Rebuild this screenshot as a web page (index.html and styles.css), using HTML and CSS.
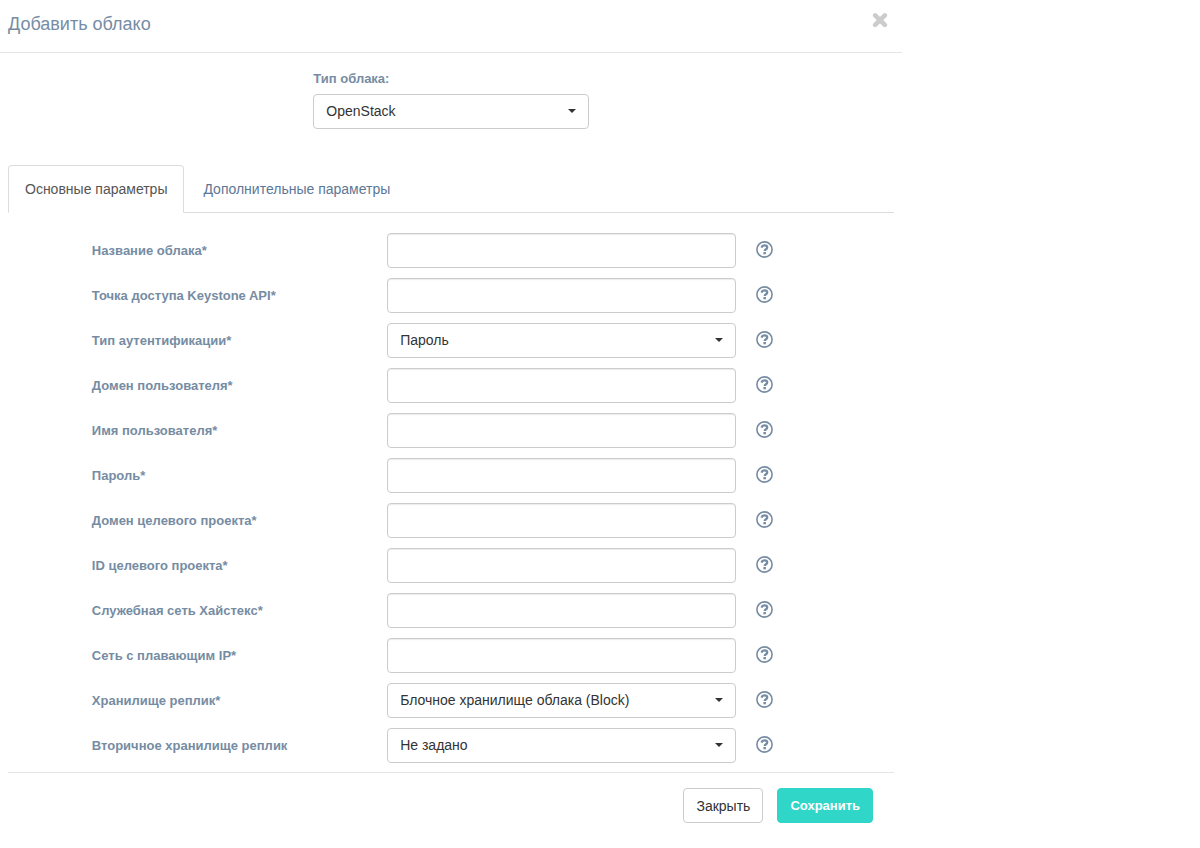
FILE: index.html
```html
<!DOCTYPE html>
<html lang="ru">

<head>
    <meta charset="UTF-8">
    <meta name="viewport" content="width=device-width, initial-scale=1.0">
    <title>Добавить облако</title>
    <link rel="stylesheet" href="styles.css">
</head>

<body>
    <svg class="sprite" aria-hidden="true">
        <symbol id="icon-help" viewBox="0 0 17 17">
            <circle cx="8.5" cy="8.5" r="7.6" fill="none" stroke="currentColor" stroke-width="1.6" />
            <path d="M5.5 6.6C6 5.1 7 4.4 8.5 4.4c1.6 0 2.7.8 2.7 2.1 0 1.8-2.5 1.7-2.5 3.6" fill="none" stroke="currentColor" stroke-width="2.3" />
            <rect x="7.4" y="11" width="2.5" height="2.3" fill="currentColor" />
        </symbol>
    </svg>

    <div class="modal">
        <header class="modal-header">
            <h1 class="modal-title">Добавить облако</h1>
            <button type="button" class="close" aria-label="Закрыть окно">
                <svg width="16" height="16" viewBox="0 0 16 16">
                    <path d="M3.2 3.4l9.6 9.4M12.8 3.4l-9.6 9.4" stroke="currentColor" stroke-width="4.6" stroke-linecap="round" />
                </svg>
            </button>
        </header>

        <form class="modal-body">
            <div class="row">
                <div class="cloud-type">
                    <label for="cloudType">Тип облака:</label>
                    <div class="select">
                        <select id="cloudType">
                            <option>OpenStack</option>
                        </select>
                    </div>
                </div>
            </div>

            <nav class="tabs">
                <a href="#main" class="tab active">Основные параметры</a>
                <a href="#extra" class="tab">Дополнительные параметры</a>
            </nav>

            <div class="fields" id="main">
                <div class="row">
                    <label for="name">Название облака*</label>
                    <div class="control"><input type="text" id="name"></div>
                    <button type="button" class="help" aria-label="Справка"><svg><use href="#icon-help" /></svg></button>
                </div>
                <div class="row">
                    <label for="keystone">Точка доступа Keystone API*</label>
                    <div class="control"><input type="text" id="keystone"></div>
                    <button type="button" class="help" aria-label="Справка"><svg><use href="#icon-help" /></svg></button>
                </div>
                <div class="row">
                    <label for="authType">Тип аутентификации*</label>
                    <div class="control select">
                        <select id="authType">
                            <option>Пароль</option>
                        </select>
                    </div>
                    <button type="button" class="help" aria-label="Справка"><svg><use href="#icon-help" /></svg></button>
                </div>
                <div class="row">
                    <label for="userDomain">Домен пользователя*</label>
                    <div class="control"><input type="text" id="userDomain"></div>
                    <button type="button" class="help" aria-label="Справка"><svg><use href="#icon-help" /></svg></button>
                </div>
                <div class="row">
                    <label for="userName">Имя пользователя*</label>
                    <div class="control"><input type="text" id="userName"></div>
                    <button type="button" class="help" aria-label="Справка"><svg><use href="#icon-help" /></svg></button>
                </div>
                <div class="row">
                    <label for="password">Пароль*</label>
                    <div class="control"><input type="password" id="password"></div>
                    <button type="button" class="help" aria-label="Справка"><svg><use href="#icon-help" /></svg></button>
                </div>
                <div class="row">
                    <label for="projectDomain">Домен целевого проекта*</label>
                    <div class="control"><input type="text" id="projectDomain"></div>
                    <button type="button" class="help" aria-label="Справка"><svg><use href="#icon-help" /></svg></button>
                </div>
                <div class="row">
                    <label for="projectId">ID целевого проекта*</label>
                    <div class="control"><input type="text" id="projectId"></div>
                    <button type="button" class="help" aria-label="Справка"><svg><use href="#icon-help" /></svg></button>
                </div>
                <div class="row">
                    <label for="network">Служебная сеть Хайстекс*</label>
                    <div class="control"><input type="text" id="network"></div>
                    <button type="button" class="help" aria-label="Справка"><svg><use href="#icon-help" /></svg></button>
                </div>
                <div class="row">
                    <label for="floatingNetwork">Сеть с плавающим IP*</label>
                    <div class="control"><input type="text" id="floatingNetwork"></div>
                    <button type="button" class="help" aria-label="Справка"><svg><use href="#icon-help" /></svg></button>
                </div>
                <div class="row">
                    <label for="storage">Хранилище реплик*</label>
                    <div class="control select">
                        <select id="storage">
                            <option>Блочное хранилище облака (Block)</option>
                        </select>
                    </div>
                    <button type="button" class="help" aria-label="Справка"><svg><use href="#icon-help" /></svg></button>
                </div>
                <div class="row">
                    <label for="secondStorage">Вторичное хранилище реплик</label>
                    <div class="control select">
                        <select id="secondStorage">
                            <option>Не задано</option>
                        </select>
                    </div>
                    <button type="button" class="help" aria-label="Справка"><svg><use href="#icon-help" /></svg></button>
                </div>
            </div>

            <footer class="modal-footer">
                <button type="button" class="btn">Закрыть</button>
                <button type="submit" class="btn btn-primary">Сохранить</button>
            </footer>
        </form>
    </div>
</body>

</html>
```

FILE: styles.css
```css
* {
    box-sizing: border-box;
}

body {
    margin: 0;
    background-color: #fff;
    color: #768ca3;
    font-family: "Liberation Sans", Arial, sans-serif;
    font-size: 14px;
    line-height: 20px;
}

button,
input,
select {
    font: inherit;
}

.sprite {
    display: none;
}

.modal {
    max-width: 902px;
}

.modal-header {
    display: flex;
    justify-content: space-between;
    align-items: flex-start;
    padding: 12px 14px 16px 8px;
    border-bottom: 1px solid #e5e5e5;
}

.modal-title {
    margin: 0;
    font-size: 18px;
    font-weight: normal;
    line-height: 24px;
}

.close,
.help {
    display: flex;
    padding: 0;
    border: 0;
    background: none;
    color: inherit;
    cursor: pointer;
}

.close {
    color: #ccc;
}

.modal-body {
    padding: 16px 8px;
}

.row {
    display: grid;
    grid-template-columns: repeat(12, 1fr);
    align-items: center;
}

label {
    font-size: 13px;
    font-weight: bold;
}

.cloud-type {
    grid-column: 5 / span 4;
    padding: 0 10px;
}

.cloud-type label {
    display: block;
    margin-bottom: 5px;
}

input,
select {
    display: block;
    width: 100%;
    height: 35px;
    padding: 6px 12px;
    border: 1px solid #ccc;
    border-radius: 4px;
    background-color: #fff;
    color: #333;
}

input {
    box-shadow: inset 0 1px 1px rgba(0, 0, 0, .08);
}

select {
    padding-bottom: 8px;
    appearance: none;
}

.select {
    position: relative;
}

/* caret */
.select::after {
    content: "";
    position: absolute;
    top: 15px;
    right: 13px;
    border: 4px solid transparent;
    border-top-color: #333;
    border-bottom: 0;
    pointer-events: none;
}

.tabs {
    display: flex;
    gap: 2px;
    margin-top: 36px;
    border-bottom: 1px solid #ddd;
}

.tab {
    margin-bottom: -1px;
    padding: 13px 16px;
    border: 1px solid transparent;
    border-radius: 4px 4px 0 0;
    color: #5c7796;
    text-decoration: none;
}

.tab.active {
    border-color: #ddd;
    border-bottom-color: #fff;
    color: #555;
}

.fields {
    display: grid;
    gap: 10px;
    padding: 20px 0 9px;
}

.fields label {
    grid-column: 2 / span 4;
    padding-left: 10px;
}

.control {
    grid-column: 6 / span 5;
    margin: 0 10px;
}

.help {
    padding: 0 0 3px 10px;
}

.help svg {
    width: 17px;
    height: 17px;
}

.modal-footer {
    display: flex;
    justify-content: flex-end;
    gap: 14px;
    padding: 15px 21px 0;
    border-top: 1px solid #e5e5e5;
}

.btn {
    height: 35px;
    padding: 0 12px;
    border: 1px solid #ccc;
    border-radius: 4px;
    background-color: #fff;
    color: #333;
    cursor: pointer;
}

.btn-primary {
    border-color: #2fd5c7;
    background-color: #30d6c8;
    color: #fff;
    font-size: 13px;
    font-weight: bold;
}
```
